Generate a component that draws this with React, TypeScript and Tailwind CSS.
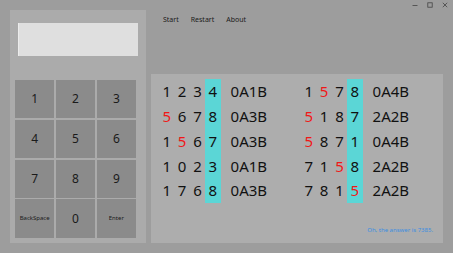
const keys = ["1", "2", "3", "4", "5", "6", "7", "8", "9", "BackSpace", "0", "Enter"];

type Guess = { d: string[]; red: number[]; res: string };

const left: Guess[] = [
  { d: ["1", "2", "3", "4"], red: [], res: "0A1B" },
  { d: ["5", "6", "7", "8"], red: [0], res: "0A3B" },
  { d: ["1", "5", "6", "7"], red: [1], res: "0A3B" },
  { d: ["1", "0", "2", "3"], red: [], res: "0A1B" },
  { d: ["1", "7", "6", "8"], red: [], res: "0A3B" },
];

const right: Guess[] = [
  { d: ["1", "5", "7", "8"], red: [1], res: "0A4B" },
  { d: ["5", "1", "8", "7"], red: [0], res: "2A2B" },
  { d: ["5", "8", "7", "1"], red: [0], res: "0A4B" },
  { d: ["7", "1", "5", "8"], red: [2], res: "2A2B" },
  { d: ["7", "8", "1", "5"], red: [3], res: "2A2B" },
];

function Column({ rows }: { rows: Guess[] }) {
  return (
    <div className="flex flex-col w-[145px]">
      {rows.map((r, i) => (
        <div key={i} className="flex items-center h-[24.8px]">
          {r.d.map((c, j) => (
            <div
              key={j}
              className={
                "w-[15.4px] h-full flex items-center justify-center " +
                (j === 3 ? "bg-[#5bd6d6] " : "") +
                (r.red.includes(j) ? "text-[#f01818]" : "text-[#111]")
              }
            >
              {c}
            </div>
          ))}
          <div className="ml-[10px] text-[#111]">{r.res}</div>
        </div>
      ))}
    </div>
  );
}

export default function App() {
  return (
    <div
      className="w-[453px] h-[253px] bg-[#9d9d9d] flex flex-col overflow-hidden"
      style={{ fontFamily: '"Noto Sans", "Open Sans", sans-serif' }}
    >
      {/* title bar */}
      <div className="h-[10px] flex justify-end items-center pr-[5px] gap-[9px]">
        <svg width="6" height="6" viewBox="0 0 6 6">
          <line x1="0.5" y1="3.5" x2="5.5" y2="3.5" stroke="#444" strokeWidth="0.8" />
        </svg>
        <svg width="6" height="6" viewBox="0 0 6 6">
          <rect x="0.8" y="0.8" width="4.4" height="4.4" fill="none" stroke="#444" strokeWidth="0.8" />
        </svg>
        <svg width="6" height="6" viewBox="0 0 6 6">
          <path d="M0.8 0.8 L5.2 5.2 M5.2 0.8 L0.8 5.2" stroke="#444" strokeWidth="0.8" />
        </svg>
      </div>

      <div className="flex pl-[10px]">
        {/* left: calculator */}
        <div className="w-[136px] h-[233px] bg-[#ababab] flex flex-col">
          <div className="mt-[13px] mx-[8px] h-[33px] bg-[#dfdfdf] border-l border-[#ececec]" />
          <div className="mt-[24px] ml-[5px] w-[121px] grid grid-cols-3 gap-[1.5px]">
            {keys.map((k) => (
              <div
                key={k}
                className={
                  "h-[38.3px] bg-[#8b8b8b] flex items-center justify-center text-[#1a1a1a] " +
                  (k.length > 1 ? "text-[6px]" : "text-[12px]")
                }
              >
                {k}
              </div>
            ))}
          </div>
        </div>

        {/* right: menu + board */}
        <div className="flex flex-col ml-[5px]">
          <div className="h-[19px] flex items-center gap-[12px] pl-[12px] pt-[1px] text-[7px] text-[#1a1a1a]">
            <span>Start</span>
            <span>Restart</span>
            <span>About</span>
          </div>
          <div className="mt-[45px] w-[292px] h-[169px] bg-[#adadad] flex flex-col text-[15px]">
            <div className="flex pl-[8px] pt-[5px]">
              <Column rows={left} />
              <Column rows={right} />
            </div>
            <div className="mt-auto mb-[8px] pr-[10px] text-right text-[6px] text-[#3b8ee0]">
              Oh, the answer is 7385.
            </div>
          </div>
        </div>
      </div>
    </div>
  );
}
